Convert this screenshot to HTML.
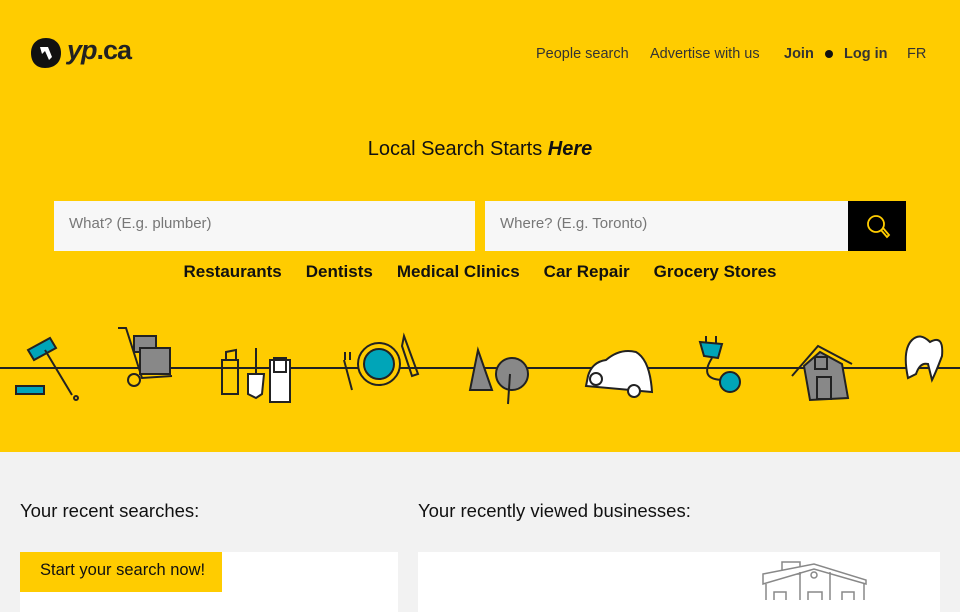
<!DOCTYPE html>
<html><head><meta charset="utf-8"><style>
*{margin:0;padding:0;box-sizing:border-box}
body{width:960px;height:600px;overflow:hidden;font-family:"Liberation Sans",sans-serif;background:#f2f2f2;color:#222}
.top{position:absolute;left:0;top:0;width:960px;height:452px;background:#ffcc00}
.nav{position:absolute;top:46px;font-size:14.5px;color:#333}
.in{position:absolute;top:201px;height:50px;background:#f7f7f7;color:#777;font-size:15px;padding:14px 15px}
.cats{position:absolute;top:262px;left:0;width:960px;text-align:center;font-size:17px;font-weight:bold;color:#111}
.cats span{margin:0 12px}
</style></head><body>
<div class="top">
<svg style="position:absolute;left:30px;top:37px" width="32" height="32" viewBox="0 0 32 32"><path d="M16 1C25 1 31 7 31 16 31 25 25 31 15 31 6 31 1 25 1 16 1 7 7 1 16 1Z" fill="#111"/><path d="M10 10 L18 10 L22 20 L19 23 L15 14 L12 17 Z" fill="#fff"/></svg>
<div style="position:absolute;left:67px;top:35px;font-size:27px;font-weight:bold;color:#222;letter-spacing:-1px"><i>yp</i>.ca</div>
<div class="nav" style="left:536px">People search</div>
<div class="nav" style="left:650px">Advertise with us</div>
<div class="nav" style="left:784px;font-weight:bold">Join</div>
<div style="position:absolute;left:825px;top:50px;width:8px;height:8px;border-radius:50%;background:#111"></div>
<div class="nav" style="left:844px;font-weight:bold">Log in</div>
<div class="nav" style="left:907px">FR</div>
<div style="position:absolute;top:138px;left:0;width:960px;text-align:center;font-size:20px;color:#111">Local Search Starts <b><i>Here</i></b></div>
<div class="in" style="left:54px;width:421px">What? (E.g. plumber)</div>
<div class="in" style="left:485px;width:363px">Where? (E.g. Toronto)</div>
<div style="position:absolute;left:848px;top:201px;width:58px;height:50px;background:#000">
<svg width="58" height="50"><circle cx="28" cy="23" r="8" fill="none" stroke="#ffcc00" stroke-width="1.8"/><path d="M33 29 L39 36 L41 34 L35 27" fill="none" stroke="#ffcc00" stroke-width="1.8"/></svg></div>
<div class="cats"><span>Restaurants</span><span>Dentists</span><span>Medical Clinics</span><span>Car Repair</span><span>Grocery Stores</span></div>
<svg style="position:absolute;left:0;top:320px" width="960" height="100" viewBox="0 0 960 100" fill="none" stroke="#222" stroke-width="2">
<line x1="0" y1="48" x2="960" y2="48"/>
<path d="M28 30 L50 18 L56 28 L34 40 Z" fill="#00a5b8"/><path d="M45 30 L72 75"/><circle cx="76" cy="78" r="2"/>
<rect x="16" y="66" width="28" height="8" fill="#00a5b8"/>
<path d="M118 8 L126 8 L142 58 L172 56"/><circle cx="134" cy="60" r="6"/>
<rect x="134" y="16" width="22" height="16" fill="#888"/><rect x="140" y="28" width="30" height="26" fill="#888"/>
<rect x="222" y="40" width="16" height="34"/><path d="M226 40 L226 32 L236 30 L236 40"/>
<path d="M256 28 L256 54 M248 54 L264 54 L262 74 L256 78 L248 74 Z" fill="#fff"/>
<rect x="270" y="40" width="20" height="42" fill="#fff"/><rect x="274" y="38" width="12" height="14"/>
<circle cx="379" cy="44" r="21" fill="#ffcc00"/><circle cx="379" cy="44" r="15" fill="#00a5b8"/>
<path d="M344 40 L352 70 M345 32 L345 40 M350 32 L350 40"/><path d="M404 16 L418 54 L412 56 L402 26 Z"/>
<path d="M478 30 L470 70 L492 70 Z" fill="#888"/><circle cx="512" cy="54" r="16" fill="#888"/><path d="M510 54 L508 84"/>
<path d="M588 56 Q592 42 606 40 Q620 28 636 32 Q650 40 652 72 L586 66 Z" fill="#fff"/><circle cx="596" cy="59" r="6" fill="#fff"/><circle cx="634" cy="71" r="6" fill="#fff"/>
<path d="M700 22 L722 24 L718 38 L704 36 Z" fill="#00a5b8"/><path d="M706 16 L706 22 M716 16 L716 24 M712 38 Q698 60 724 60"/><circle cx="730" cy="62" r="10" fill="#00a5b8"/>
<path d="M792 56 L818 26 L852 44" /><path d="M804 46 L820 32 L842 44 L848 78 L810 80 Z" fill="#888"/><rect x="817" y="57" width="14" height="22"/><rect x="815" y="37" width="12" height="12"/>
<path d="M912 20 Q920 12 930 22 Q944 14 942 36 Q936 52 932 60 L928 44 Q920 42 916 54 L908 58 Q902 30 912 20 Z" fill="#fff"/>
</svg>
</div>
<div style="position:absolute;left:20px;top:500px;font-size:18.5px;color:#111">Your recent searches:</div>
<div style="position:absolute;left:418px;top:500px;font-size:18.5px;color:#111">Your recently viewed businesses:</div>
<div style="position:absolute;left:20px;top:552px;width:378px;height:60px;background:#fff"></div>
<div style="position:absolute;left:20px;top:552px;width:202px;height:40px;background:#ffcc00;font-size:16.5px;padding:9px 0 0 20px;color:#111">Start your search now!</div>
<div style="position:absolute;left:418px;top:552px;width:522px;height:60px;background:#fff"></div>
<svg style="position:absolute;left:760px;top:560px" width="110" height="40" fill="none" stroke="#888" stroke-width="1.5"><rect x="22" y="2" width="18" height="12"/><path d="M3 18 L3 14 L54 4 L106 20 L106 24 L54 9 L3 24 Z" fill="#fff"/><circle cx="54" cy="15" r="3"/><path d="M6 24 L6 40 M104 24 L104 40 M40 12 L40 40 M70 12 L70 40"/><rect x="14" y="32" width="12" height="10"/><rect x="48" y="32" width="14" height="10"/><rect x="82" y="32" width="12" height="10"/></svg>
</body></html>
